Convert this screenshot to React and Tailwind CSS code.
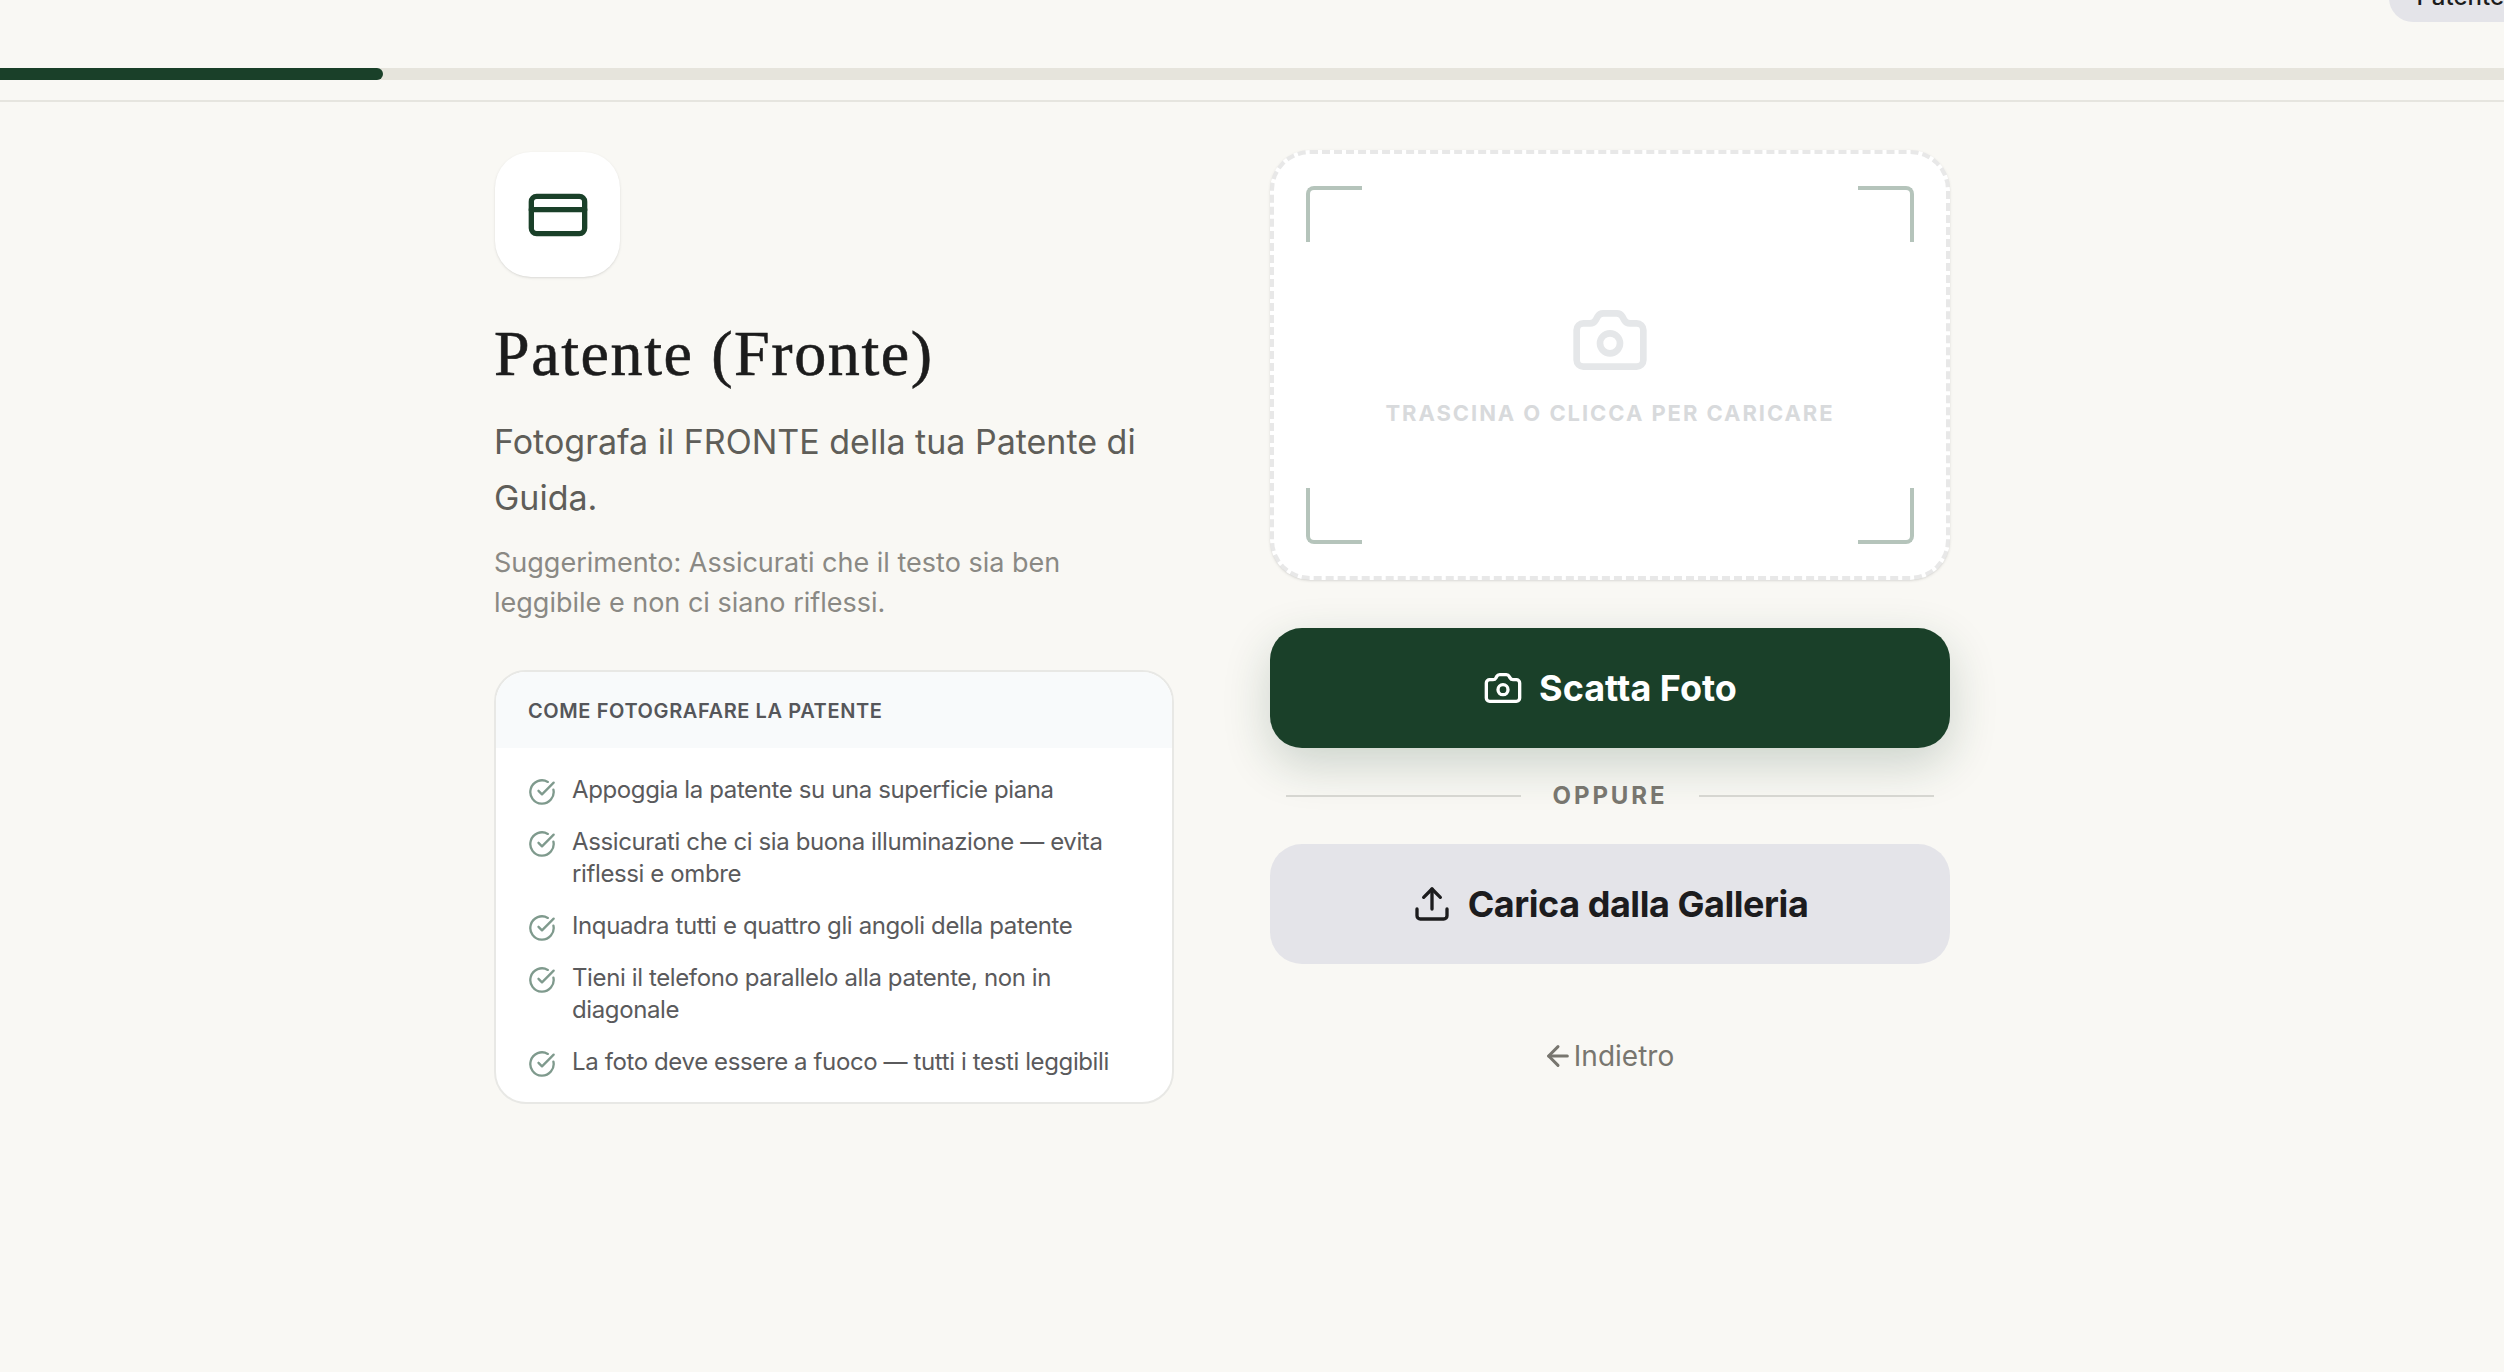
import React from 'react';
import { Camera, CircleCheckBig, CreditCard, Upload, ArrowLeft } from 'lucide-react';

const tips = [
  'Appoggia la patente su una superficie piana',
  'Assicurati che ci sia buona illuminazione — evita riflessi e ombre',
  'Inquadra tutti e quattro gli angoli della patente',
  'Tieni il telefono parallelo alla patente, non in diagonale',
  'La foto deve essere a fuoco — tutti i testi leggibili',
];

function App() {
  return (
    <div className="relative h-[1372px] w-full overflow-hidden bg-[#f9f8f4] font-['Inter',sans-serif] text-[#1c1c1c]">
      {/* Pill cut off by the top of the page */}
      <div className="absolute right-[-28px] top-[-30px] flex h-[52px] items-end rounded-[24px] bg-[#e4e4e9] px-7 pb-[9px] text-[24px] font-medium leading-[32px]">
        Patente
      </div>

      {/* Progress */}
      <div className="h-[102px] border-b-2 border-[#e6e5df] pt-[68px]">
        <div className="h-3 w-full bg-[#e6e4dc]">
          <div className="h-3 w-[383px] rounded-r-full bg-[#1a4029]" />
        </div>
      </div>

      <div className="flex gap-[96px] pl-[494px] pt-[48px]">
        {/* Left column */}
        <div className="w-[680px] pt-[2px]">
          <div className="ml-[1px] flex h-[125px] w-[125px] items-center justify-center rounded-[36px] bg-white shadow-sm">
            <CreditCard size={64} strokeWidth={2} className="text-[#1a4029]" />
          </div>
          <h1 className="mt-[41px] font-['Liberation_Serif',serif] text-[64px] font-normal leading-[72px] tracking-[0.025em] [-webkit-text-stroke:0.6px_#1c1c1c]">
            Patente (Fronte)
          </h1>
          <p className="mt-[24px] text-[34px] leading-[56px] text-[#5f5e59]">
            Fotografa il FRONTE della tua Patente di Guida.
          </p>
          <p className="mt-[17px] max-w-[600px] text-[27px] leading-[40px] text-[#8a8984]">
            Suggerimento: Assicurati che il testo sia ben leggibile e non ci siano riflessi.
          </p>

          {/* Tips card */}
          <div className="mt-[47px] overflow-hidden rounded-[32px] border-2 border-[#e8e8e5] bg-white">
            <div className="flex h-[76px] items-center bg-[#f8fafb] px-8 pt-[2px] text-[20px] font-semibold tracking-[0.03em] text-[#55565a]">
              COME FOTOGRAFARE LA PATENTE
            </div>
            <ul className="flex flex-col gap-5 px-8 pb-[24px] pt-[26px]">
              {tips.map((tip) => (
                <li key={tip} className="flex gap-4 text-[24px] leading-[32px] tracking-[-0.016em] text-[#5a5a5c]">
                  <CircleCheckBig size={28} strokeWidth={2} className="mt-[4px] shrink-0 text-[#7f9a8d]" />
                  <span>{tip}</span>
                </li>
              ))}
            </ul>
          </div>
        </div>

        {/* Right column */}
        <div className="w-[680px]">
          <div className="relative flex h-[430px] flex-col items-center justify-center rounded-[40px] border-4 border-dashed border-[#e8e8e8] bg-white shadow-sm">
            <div className="absolute left-8 top-8 h-14 w-14 rounded-tl-lg border-l-4 border-t-4 border-[#b5c4bb]" />
            <div className="absolute right-8 top-8 h-14 w-14 rounded-tr-lg border-r-4 border-t-4 border-[#b5c4bb]" />
            <div className="absolute bottom-8 left-8 h-14 w-14 rounded-bl-lg border-b-4 border-l-4 border-[#b5c4bb]" />
            <div className="absolute bottom-8 right-8 h-14 w-14 rounded-br-lg border-b-4 border-r-4 border-[#b5c4bb]" />
            <Camera size={80} strokeWidth={2} className="mt-[-3px] text-[#e5e7e9]" />
            <span className="mt-[19px] text-[22px] font-bold leading-[28px] tracking-[0.088em] text-[#d8dadc]">
              TRASCINA O CLICCA PER CARICARE
            </span>
          </div>

          <button className="mt-[48px] flex h-[120px] w-full items-center justify-center gap-4 rounded-[32px] bg-[#1a4029] text-[36px] font-bold text-white shadow-[0_16px_48px_rgba(26,64,41,0.2)]">
            <Camera size={40} strokeWidth={2} />
            Scatta Foto
          </button>

          <div className="mt-[33px] flex items-center gap-8 px-4">
            <div className="h-[2px] flex-1 bg-[#d6d6d1]" />
            <span className="text-[24px] font-bold leading-[30px] tracking-[0.12em] text-[#78766f]">OPPURE</span>
            <div className="h-[2px] flex-1 bg-[#d6d6d1]" />
          </div>

          <button className="mt-[33px] flex h-[120px] w-full items-center justify-center gap-4 rounded-[32px] bg-[#e4e4e9] text-[36px] font-bold tracking-[-0.45px] text-[#1c1c1e]">
            <Upload size={40} strokeWidth={2} />
            Carica dalla Galleria
          </button>

          <div className="mt-[72px] flex items-center justify-center pr-[4px] text-[28px] leading-[40px] text-[#78766f]">
            <ArrowLeft size={32} strokeWidth={2.25} />
            Indietro
          </div>
        </div>
      </div>
    </div>
  );
}

export default App;
